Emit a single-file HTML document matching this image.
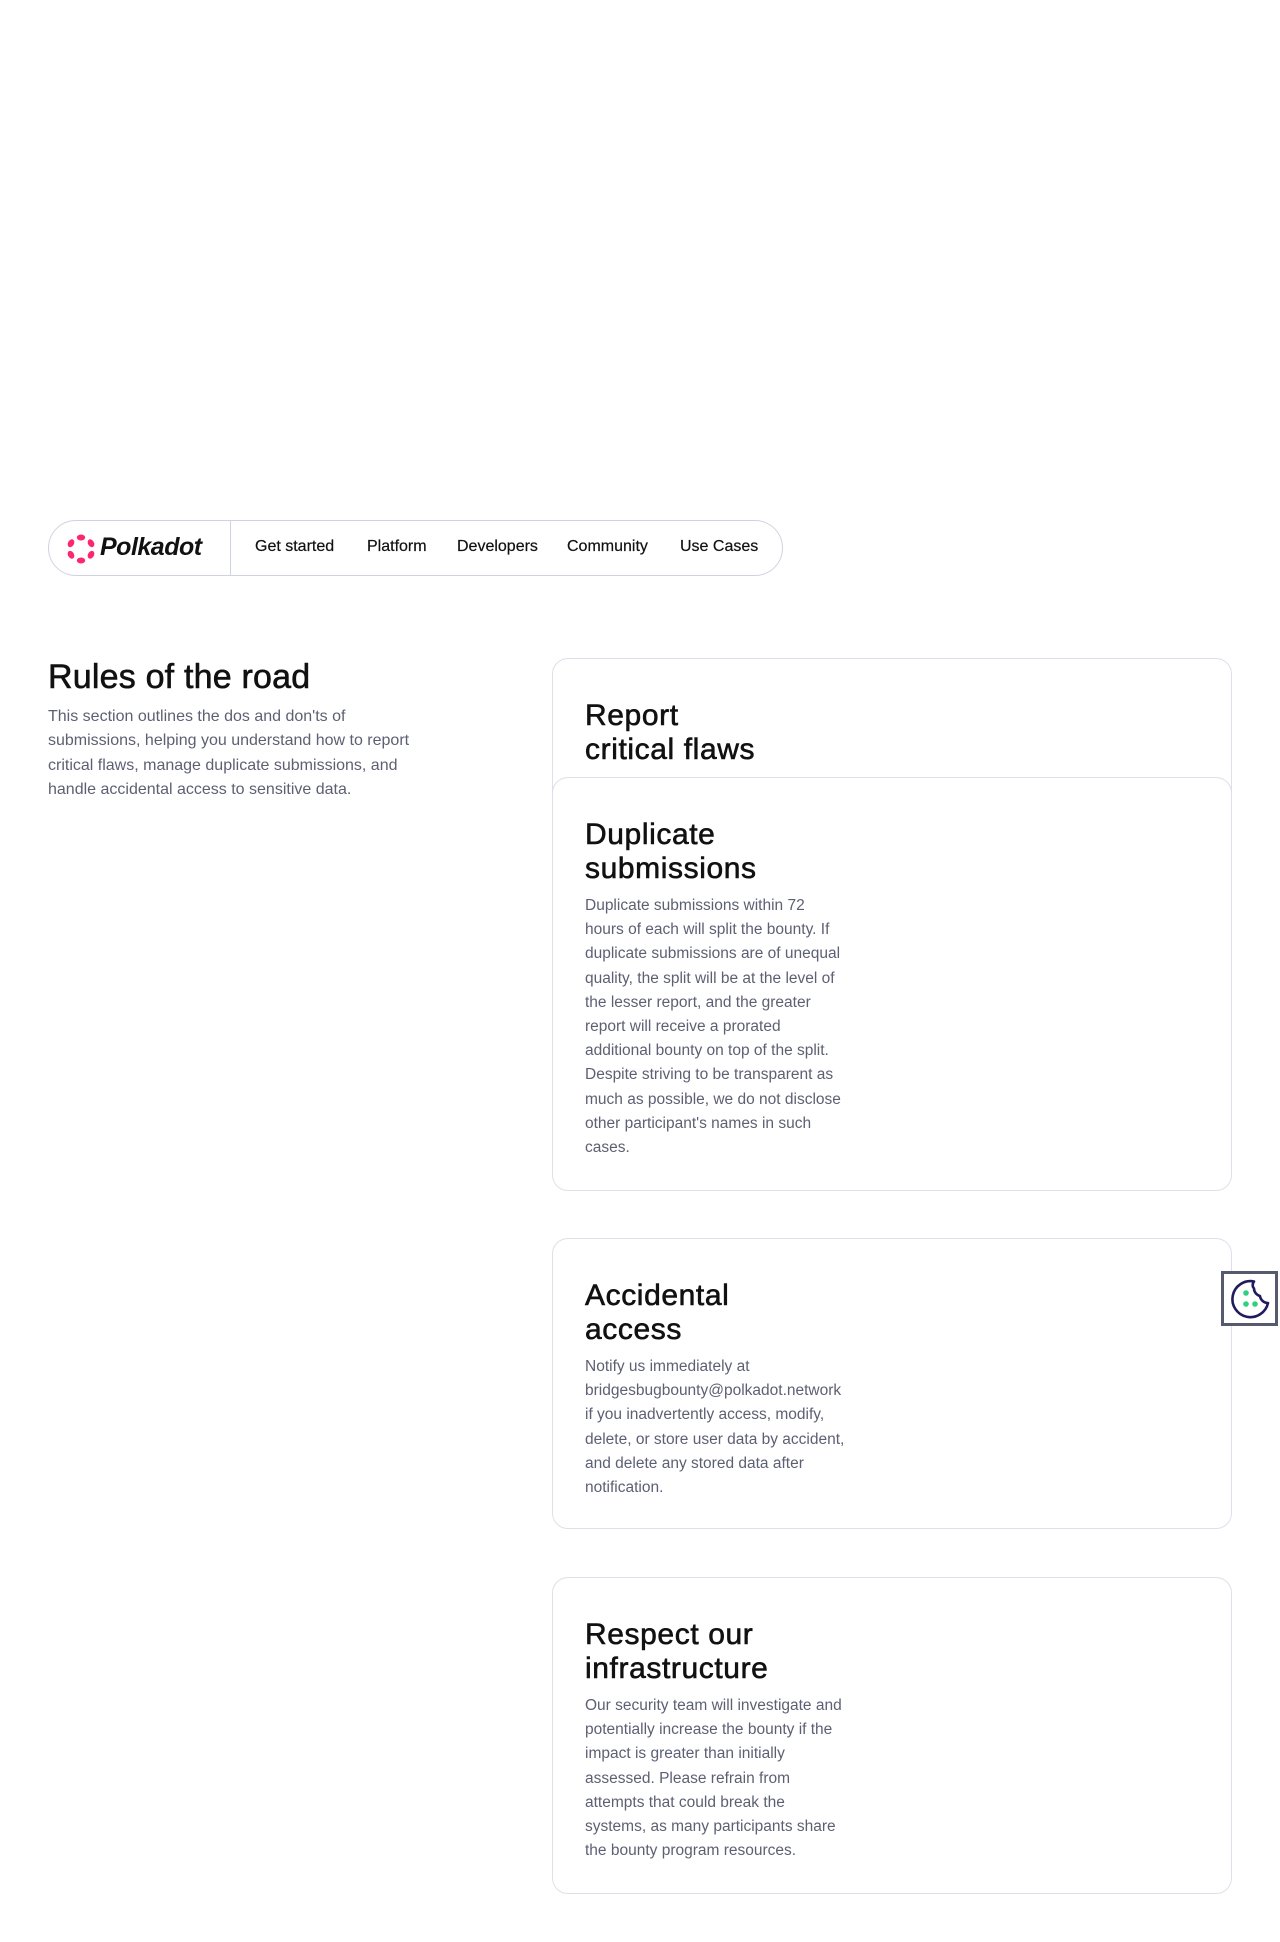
<!DOCTYPE html>
<html><head><meta charset="utf-8"><style>
*{margin:0;padding:0;box-sizing:border-box}
body{width:1280px;height:1942px;background:#fff;position:relative;font-family:"Liberation Sans",sans-serif;overflow:hidden}
.nav{position:absolute;left:48px;top:520px;width:735px;height:56px;border:1px solid #cfd3df;border-radius:28px}
.div{position:absolute;left:181px;top:0;width:1px;height:54px;background:#cfd3df}
.ni{position:absolute;top:17px;font-size:16px;color:#111;white-space:nowrap;-webkit-text-stroke:0.2px #111}
.logo{position:absolute;left:51px;top:12px;font-size:25px;font-weight:bold;font-style:italic;color:#111;letter-spacing:-0.5px}
h1{position:absolute;left:48px;top:658px;font-size:34px;font-weight:normal;color:#111;letter-spacing:0.2px;-webkit-text-stroke:0.6px #111}
.lp{position:absolute;left:48px;top:705px;font-size:16px;line-height:24.3px;color:#5d6073;white-space:nowrap}
.card{position:absolute;left:552px;width:680px;border:1px solid #dde0e8;border-radius:16px;background:#fff;padding:40px 32px 0}
.card h2{font-size:30px;font-weight:normal;line-height:34px;color:#111;letter-spacing:0.6px;-webkit-text-stroke:0.6px #111}
.card p{margin-top:8px;font-size:15.5px;line-height:24.2px;color:#5d6073;white-space:nowrap}
</style></head><body>
<div class="nav">
<svg style="position:absolute;left:17px;top:13px" width="30" height="30" viewBox="0 0 30 30">
<g fill="#ff2670"><ellipse cx="15" cy="3.5" rx="4.2" ry="3"/><ellipse cx="15" cy="26.5" rx="4.2" ry="3"/>
<ellipse cx="5" cy="9.2" rx="4.2" ry="3" transform="rotate(-60 5 9.2)"/><ellipse cx="25" cy="9.2" rx="4.2" ry="3" transform="rotate(60 25 9.2)"/>
<ellipse cx="5" cy="20.8" rx="4.2" ry="3" transform="rotate(60 5 20.8)"/><ellipse cx="25" cy="20.8" rx="4.2" ry="3" transform="rotate(-60 25 20.8)"/></g></svg>
<div class="logo">Polkadot</div>
<div class="div"></div>
<div class="ni" style="left:206px">Get started</div>
<div class="ni" style="left:318px">Platform</div>
<div class="ni" style="left:408px">Developers</div>
<div class="ni" style="left:518px">Community</div>
<div class="ni" style="left:631px">Use Cases</div>
</div>
<h1>Rules of the road</h1>
<div class="lp">This section outlines the dos and don'ts of<br>submissions, helping you understand how to report<br>critical flaws, manage duplicate submissions, and<br>handle accidental access to sensitive data.</div>

<div class="card" style="top:658px;height:160px"><h2>Report<br>critical flaws</h2></div>
<div class="card" style="top:777px;height:414px"><h2>Duplicate<br>submissions</h2>
<p>Duplicate submissions within 72<br>hours of each will split the bounty. If<br>duplicate submissions are of unequal<br>quality, the split will be at the level of<br>the lesser report, and the greater<br>report will receive a prorated<br>additional bounty on top of the split.<br>Despite striving to be transparent as<br>much as possible, we do not disclose<br>other participant's names in such<br>cases.</p></div>
<div class="card" style="top:1238px;height:291px"><h2>Accidental<br>access</h2>
<p>Notify us immediately at<br>bridgesbugbounty@polkadot.network<br>if you inadvertently access, modify,<br>delete, or store user data by accident,<br>and delete any stored data after<br>notification.</p></div>
<div class="card" style="top:1577px;height:317px"><h2>Respect our<br>infrastructure</h2>
<p>Our security team will investigate and<br>potentially increase the bounty if the<br>impact is greater than initially<br>assessed. Please refrain from<br>attempts that could break the<br>systems, as many participants share<br>the bounty program resources.</p></div>

<div style="position:absolute;left:1221px;top:1271px;width:57px;height:55px;border:3px solid #555a6e;background:#fff">
<svg width="51" height="49" viewBox="0 0 51 49"><path d="M30 7.5 A18 18 0 1 0 44 29 C40 29 36.5 26 36 22 C32.5 21 30 18 30 14.5 C28.5 13 28 10 30 7.5 Z" fill="none" stroke="#1e1b5e" stroke-width="2.6" stroke-linejoin="round"/>
<circle cx="22" cy="19" r="2.8" fill="#2ed17f"/><circle cx="22" cy="30" r="2.8" fill="#2ed17f"/><circle cx="31" cy="30" r="2.8" fill="#2ed17f"/></svg></div>
</body></html>
